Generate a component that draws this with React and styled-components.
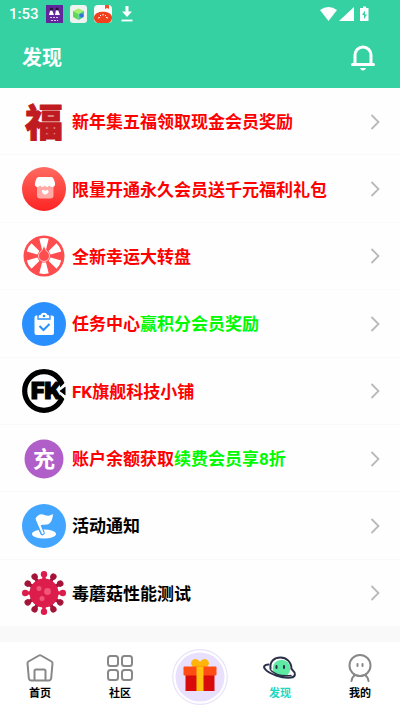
import React from 'react';
import styled, { createGlobalStyle } from 'styled-components';

const GlobalStyle = createGlobalStyle`
    * {
        box-sizing: border-box;
    }
    body {
        margin: 0;
        background: #ffffff;
        font-family: Roboto, "Noto Sans CJK SC", sans-serif;
    }
`;

const Page = styled.div`
    display: flex;
    flex-direction: column;
    min-height: 100vh;
    background: #fefefe;
`;
const Header = styled.header`
    background: #36d1a3;
    color: white;
`;
const StatusBar = styled.div`
    display: flex;
    align-items: center;
    height: 28px;
    padding: 0 29px 0 9px;
    font-size: 15px;
    font-weight: 500;
`;
const StatusIcons = styled.div`
    display: flex;
    align-items: center;
    gap: 7px;
    margin-left: 7px;
`;
const Signals = styled.div`
    display: flex;
    align-items: center;
    gap: 2px;
    margin-left: auto;
`;
const TitleBar = styled.div`
    display: flex;
    align-items: center;
    justify-content: space-between;
    height: 60px;
    padding: 0 24px 0 22px;
`;
const Title = styled.h1`
    margin: 0;
    font-size: 20px;
    font-weight: 700;
    line-height: 30px;
`;
const BellButton = styled.button`
    display: flex;
    padding: 0;
    border: none;
    background: none;
    color: inherit;
    cursor: pointer;
`;
const List = styled.ul`
    display: flex;
    flex: 1;
    flex-direction: column;
    margin: 0;
    padding: 0;
    list-style: none;
`;
const Item = styled.li`
    display: flex;
    flex: 1;
    min-height: 60px;
    border-bottom: 1px solid #f9f9f9;
`;
const ItemLink = styled.a`
    display: flex;
    flex: 1;
    align-items: center;
    gap: 6px;
    padding: 1px 20px 0 22px;
    color: black;
    text-decoration: none;

    > svg {
        flex: none;
        overflow: visible;
    }
`;
const Label = styled.span`
    flex: 1;
    padding-top: 1px;
    font-size: 17px;
    font-weight: 700;
    line-height: 24px;
    white-space: nowrap;
`;
const Part = styled.span`
    color: ${(props) => props.$color};
`;
const Strip = styled.div`
    height: 15px;
    background: #f9f9f9;
`;
const TabBar = styled.nav`
    display: grid;
    grid-template-columns: repeat(5, 1fr);
    height: 69px;
    background: #ffffff;
`;
const Tab = styled.a`
    display: flex;
    flex-direction: column;
    align-items: center;
    justify-content: center;
    gap: 2px;
    padding-top: 1px;
    color: ${(props) => (props.$active ? '#1fd6bf' : 'black')};
    font-size: 11px;
    font-weight: 700;
    line-height: 16px;
    text-decoration: none;
`;

function LuckIcon() {
    return (
        <svg width="44" height="44" viewBox="0 0 44 44" aria-hidden="true">
            <text x="22" y="36" textAnchor="middle" fontSize="38" fontWeight="900" fill="#c01b20"
                stroke="#c01b20" strokeWidth="1" strokeLinejoin="round" fontFamily="Noto Sans CJK SC, sans-serif">福</text>
        </svg>
    );
}

function ShopIcon() {
    return (
        <svg width="44" height="44" viewBox="0 0 44 44" aria-hidden="true">
            <defs>
                <linearGradient id="shop" x1="0" y1="0" x2="0" y2="1">
                    <stop offset="0" stopColor="#ff6a60" />
                    <stop offset="1" stopColor="#fd2424" />
                </linearGradient>
            </defs>
            <circle cx="22" cy="22" r="22" fill="url(#shop)" />
            <path d="M15 18h16.500v10.500a3 3 0 0 1-3 3H18a3 3 0 0 1-3-3z" fill="#ffaaa6" />
            <path d="M16.500 10h13c1.500 0 2.500 2 3.500 6 .6 2.500-1 4-2.800 4-1.400 0-2.200-.6-2.900-1.400-1.300 1.800-3.500 1.800-4.500 0-1.300 1.800-3.500 1.800-4.500 0-.8.900-1.700 1.400-2.900 1.400-2 0-3-1.800-2.400-4 .9-4 2-6 3.500-6z" fill="white" />
            <path d="M20 23.500c1.200-1 2.200-.4 3.200.6 1-1 2.200-1.400 3.200-.4.8 1.500-1 3.200-3.200 4-2-.7-3.700-2.500-3.200-4.200z" fill="white" />
        </svg>
    );
}

function WheelIcon() {
    return (
        <svg width="44" height="44" viewBox="0 0 44 44" aria-hidden="true">
            <circle cx="22" cy="22" r="20.500" fill="#ff4d4f" />
            {[0, 60, 120, 180, 240, 300].map((angle) => (
                <path key={angle} d="M17.300 4.800q4.700-1.400 9.400 0L24 15.500h-4z" fill="white" transform={`rotate(${angle} 22 22)`} />
            ))}
            <path d="M22 11.500l2.400 5.500a5.500 5.500 0 1 1-4.800 0z" fill="#ff4d4f" stroke="white" strokeWidth=".7" />
        </svg>
    );
}

function TaskIcon() {
    return (
        <svg width="44" height="44" viewBox="0 0 44 44" aria-hidden="true">
            <circle cx="22" cy="22" r="22" fill="#2a8fff" />
            <path d="M14 13.500h16a2 2 0 0 1 2 2V31a2 2 0 0 1-2 2H14.500a2 2 0 0 1-2-2V15.500a2 2 0 0 1 1.500-2z" fill="white" />
            <path d="M16 17v-2.500a2.500 2.500 0 0 1 2.500-2.500c.6-2.500 6.400-2.500 7 0a2.500 2.500 0 0 1 2.500 2.500V17z" fill="white" stroke="#2a8fff" strokeWidth="1.300" />
            <circle cx="22" cy="14" r="1.300" fill="#2a8fff" />
            <path d="M17.500 24l4 4 6-6" fill="none" stroke="#2a8fff" strokeWidth="2" />
        </svg>
    );
}

function FkIcon() {
    return (
        <svg width="44" height="44" viewBox="0 0 44 44" aria-hidden="true">
            <circle cx="22" cy="22" r="19.300" fill="none" stroke="black" strokeWidth="5.200" />
            <path d="M36 22l7-7v14z" fill="white" stroke="white" strokeWidth="2" />
            <text x="9" y="30" fontSize="23" fontWeight="900" fill="black" stroke="black" strokeWidth="1.200"
                fontFamily="Inter, Liberation Sans, sans-serif">FK</text>
            <path d="M37.500 22l6-4.500v9z" fill="black" />
        </svg>
    );
}

function RechargeIcon() {
    return (
        <svg width="44" height="44" viewBox="0 0 44 44" aria-hidden="true">
            <circle cx="22" cy="22" r="19.500" fill="#b05fc9" />
            <text x="22" y="30" textAnchor="middle" fontSize="22" fontWeight="700" fill="white"
                fontFamily="Noto Sans CJK SC, sans-serif">充</text>
        </svg>
    );
}

function FlagIcon() {
    return (
        <svg width="44" height="44" viewBox="0 0 44 44" aria-hidden="true">
            <circle cx="22" cy="22" r="22" fill="#42a5ff" />
            <ellipse cx="22" cy="30" rx="12" ry="4.500" fill="white" />
            <path d="M14.500 15l6 14" stroke="#42a5ff" strokeWidth="4.600" strokeLinecap="round" />
            <path d="M14.800 15l5.900 14" stroke="white" strokeWidth="2" strokeLinecap="round" />
            <path d="M13.500 14.500c3-5 6-5 9-3.500 3 1.400 5 1 8.500-1-.5 7-3 10-6 10.500-3 .4-5-.5-8 2z" fill="white" />
        </svg>
    );
}

function VirusIcon() {
    const spikes = [0, 1, 2, 3, 4, 5, 6, 7, 8, 9, 10, 11];
    return (
        <svg width="44" height="44" viewBox="0 0 44 44" aria-hidden="true">
            {spikes.map((n) => (
                <g key={n} fill={n % 3 === 0 ? '#dc1c4b' : '#a31538'} transform={`rotate(${n * 30} 22 22)`}>
                    <circle cx="22" cy="3.200" r="3.200" />
                    <path d="M20.700 4h2.600l.9 6h-4.400z" />
                </g>
            ))}
            <circle cx="22" cy="22" r="14.500" fill="#dc1c4b" />
            <circle cx="25.500" cy="20.500" r="3.400" fill="#f0557a" />
            <circle cx="17" cy="17.500" r="2.500" fill="#f0557a" />
            <circle cx="20" cy="27.500" r="2.500" fill="#f0557a" />
        </svg>
    );
}

function HomeIcon() {
    return (
        <svg width="32" height="32" viewBox="0 0 32 32" fill="none" stroke="#888888" strokeWidth="2" strokeLinejoin="round" aria-hidden="true">
            <path d="M15 3.500q1-.6 2 0l10.500 6q1.200.7 1 2L27.200 26q-.3 2.500-2.500 2.500H7.300q-2.200 0-2.500-2.500L3.500 11.500q-.2-1.300 1-2z" />
            <path d="M10.500 28.500V19q0-1.500 1.500-1.500h8q1.500 0 1.500 1.500v9.500" />
        </svg>
    );
}

function GridIcon() {
    return (
        <svg width="32" height="32" viewBox="0 0 32 32" fill="none" stroke="#888888" strokeWidth="2" aria-hidden="true">
            <rect x="4" y="4" width="10" height="10" rx="2.500" />
            <rect x="18" y="4" width="10" height="10" rx="2.500" />
            <rect x="4" y="18" width="10" height="10" rx="2.500" />
            <rect x="18" y="18" width="10" height="10" rx="2.500" />
        </svg>
    );
}

function GiftIcon() {
    return (
        <svg width="56" height="56" viewBox="0 0 56 56" aria-hidden="true">
            <circle cx="28" cy="28" r="27.300" fill="white" stroke="#e9e2fb" strokeWidth="1.200" />
            <circle cx="28" cy="28" r="24.500" fill="#e9e0fd" />
            <path d="M27 18.500c-6 0-8-3-7-5.500 2-4 7-2 8 2.500 1-4.500 6-6.500 8-2.500 1 2.500-1 5.500-7 5.500z" fill="#ffb40a" stroke="#ffb40a" strokeWidth="1.500" />
            <rect x="13.500" y="26" width="29" height="16" fill="#d80a0c" />
            <rect x="11.500" y="17.500" width="33" height="9" rx="1" fill="#ff4b14" />
            <rect x="24.500" y="17.500" width="7" height="24.500" fill="#ffc20e" />
        </svg>
    );
}

function PlanetIcon() {
    return (
        <svg width="36" height="32" viewBox="0 0 36 32" fill="none" stroke="#2b3048" strokeWidth="2" strokeLinecap="round" strokeLinejoin="round" aria-hidden="true">
            <circle cx="19.500" cy="16.500" r="8.800" fill="#5eeaa5" stroke="none" />
            <path d="M8.500 17C7.500 9 12.500 5.500 18.500 5.500S29.500 10 29.500 17" />
            <path d="M6.500 12.500c-4 0-5.500 2-3.500 4.500C7 22 20 26.500 29 25.500c5-.5 5-4.500 1-8" />
            <path d="M9 18.500c5 4.500 13 6 20 5" strokeWidth="1.500" />
            <path d="M14.500 14v2M22 14v2" />
        </svg>
    );
}

function MeIcon() {
    return (
        <svg width="32" height="32" viewBox="0 0 32 32" fill="none" stroke="#888888" strokeWidth="2" strokeLinecap="round" aria-hidden="true">
            <circle cx="16" cy="13.500" r="10.500" />
            <path d="M11 23q-3 2-3.500 6M21 23q3 2 3.500 6" />
            <path d="M13.500 12v2M18.500 12v2" />
        </svg>
    );
}

function BellIcon() {
    return (
        <svg width="26" height="26" viewBox="0 0 26 26" fill="none" stroke="white" strokeLinecap="round" aria-hidden="true">
            <path d="M5 19V10a8 8 0 0 1 16 0v9" strokeWidth="3" />
            <path d="M2.500 19.500h21" strokeWidth="3" />
            <path d="M10 23h6q-1 2.500-3 2.500T10 23z" fill="white" stroke="none" />
        </svg>
    );
}

function Chevron() {
    return (
        <svg width="10" height="16" viewBox="0 0 10 16" fill="none" stroke="#b9b9b9" strokeWidth="1.800" aria-hidden="true">
            <path d="M1.500 1l7 7-7 7" />
        </svg>
    );
}

const RED = '#fe0000';
const GREEN = '#00fa00';

const items = [
    { icon: LuckIcon, parts: [['新年集五福领取现金会员奖励', RED]] },
    { icon: ShopIcon, parts: [['限量开通永久会员送千元福利礼包', RED]] },
    { icon: WheelIcon, parts: [['全新幸运大转盘', RED]] },
    { icon: TaskIcon, parts: [['任务中心', RED], ['赢积分会员奖励', GREEN]] },
    { icon: FkIcon, parts: [['FK旗舰科技小铺', RED]] },
    { icon: RechargeIcon, parts: [['账户余额获取', RED], ['续费会员享8折', GREEN]] },
    { icon: FlagIcon, parts: [['活动通知', 'black']] },
    { icon: VirusIcon, parts: [['毒蘑菇性能测试', 'black']] },
];

const tabs = [
    { icon: HomeIcon, label: '首页' },
    { icon: GridIcon, label: '社区' },
    { icon: GiftIcon },
    { icon: PlanetIcon, label: '发现', active: true },
    { icon: MeIcon, label: '我的' },
];

function Status() {
    return (
        <StatusBar>
            <span>1:53</span>
            <StatusIcons>
                <svg width="17" height="18" viewBox="0 0 17 18" aria-hidden="true">
                    <rect width="17" height="18" fill="#63259b" />
                    <path d="M3 10l1-4 2-1 2 5zM9 10l1-5 2 0 2 5z" fill="white" />
                    <circle cx="5.500" cy="4" r="1.500" fill="#20142e" />
                    <circle cx="11" cy="4" r="1.500" fill="#20142e" />
                    <path d="M4 12.500h9M5 15.500h7" stroke="#d9c6ee" strokeDasharray="2 1" />
                </svg>
                <svg width="17" height="18" viewBox="0 0 17 18" aria-hidden="true">
                    <rect width="17" height="18" rx="3" fill="#eef3ef" />
                    <path d="M3 6l5.500-2.500L14 6l-5.500 3z" fill="#a4f06a" />
                    <path d="M3 6l5.500 3v6L3 12z" fill="#5fd857" />
                    <path d="M14 6L8.500 9v6l5.500-3z" fill="#42c690" />
                    <circle cx="11.500" cy="10.500" r="2" fill="#3a71d8" />
                </svg>
                <svg width="18" height="18" viewBox="0 0 18 18" aria-hidden="true">
                    <rect width="18" height="18" rx="4" fill="#fbfbfb" />
                    <path d="M11 0h4v4l-2-1-2 1z" fill="#f0502a" />
                    <path d="M0 12c1-7 17-7 18 0 0 4-2 6-5 6H5c-3 0-5-2-5-6z" fill="#f0401c" />
                    <path d="M4 13l2-.5M6 10l1 1M9 9v1.500M12 10l-1 1M14 13l-2-.5" stroke="white" />
                </svg>
                <svg width="16" height="18" viewBox="0 0 16 18" aria-hidden="true">
                    <path d="M6.500 1h3v5.500H13L8 12 3 6.500h3.500z" fill="white" />
                    <path d="M2.500 15.500h11" stroke="white" strokeWidth="1.800" />
                </svg>
            </StatusIcons>
            <Signals>
                <svg width="17" height="16" viewBox="0 0 17 16" aria-hidden="true">
                    <path d="M0 4q8.500-6 17 0L8.500 15z" fill="white" />
                </svg>
                <svg width="15" height="16" viewBox="0 0 15 16" aria-hidden="true">
                    <path d="M15 1v14H0z" fill="white" />
                </svg>
                <svg width="15" height="18" viewBox="0 0 15 18" aria-hidden="true">
                    <path d="M5 3h2V1.500h3V3h2.500v13H4V3z" fill="white" />
                    <path d="M9 5.500L6 10h2v4l3-4.500H9z" fill="#36d1a3" />
                </svg>
            </Signals>
        </StatusBar>
    );
}

function App() {
    return (
        <Page>
            <GlobalStyle />
            <Header>
                <Status />
                <TitleBar>
                    <Title>发现</Title>
                    <BellButton type="button" aria-label="通知">
                        <BellIcon />
                    </BellButton>
                </TitleBar>
            </Header>
            <List>
                {items.map(({ icon: Icon, parts }) => (
                    <Item key={parts[0][0]}>
                        <ItemLink href="#">
                            <Icon />
                            <Label>
                                {parts.map(([text, color]) => (
                                    <Part key={text} $color={color}>{text}</Part>
                                ))}
                            </Label>
                            <Chevron />
                        </ItemLink>
                    </Item>
                ))}
            </List>
            <Strip />
            <TabBar>
                {tabs.map(({ icon: Icon, label, active }) => (
                    <Tab key={label || 'gift'} href="#" $active={active} aria-label={label || '礼包'}>
                        <Icon />
                        {label}
                    </Tab>
                ))}
            </TabBar>
        </Page>
    );
}

export default App;
